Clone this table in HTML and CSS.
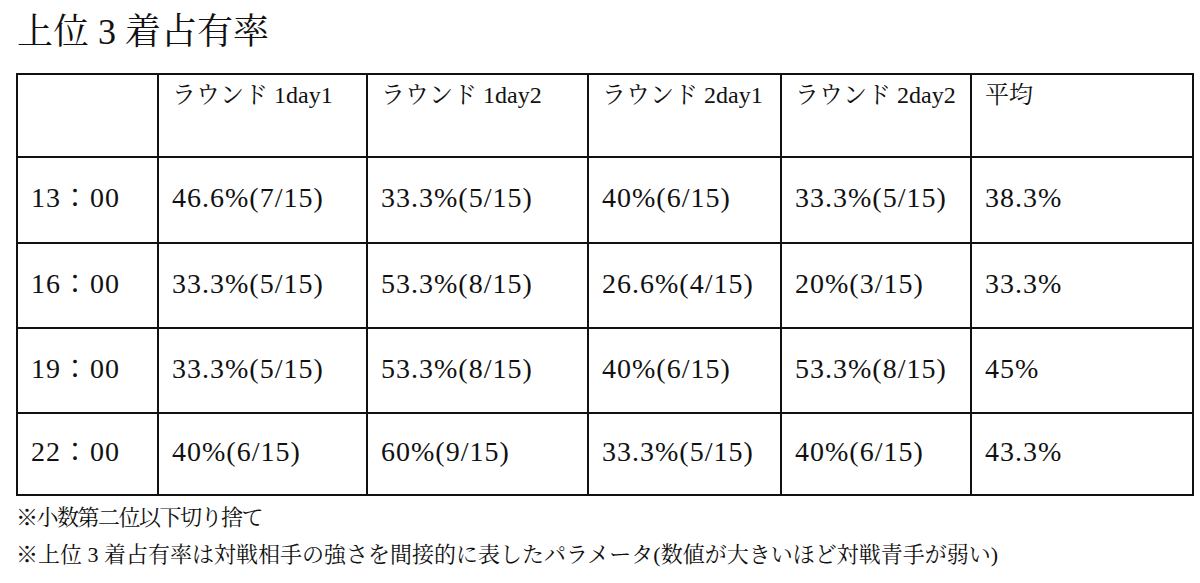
FILE: index.html
```html
<!DOCTYPE html>
<html lang="ja">
<head>
<meta charset="utf-8">
<title>上位3着占有率</title>
<link rel="stylesheet" href="styles.css">
</head>
<body>
<h1 class="title">上位 3 着占有率</h1>
<table class="stats">
  <colgroup>
    <col class="c1"><col class="c2"><col class="c3"><col class="c4"><col class="c5"><col class="c6">
  </colgroup>
  <thead>
    <tr class="head">
      <th></th>
      <th>ラウンド 1day1</th>
      <th>ラウンド 1day2</th>
      <th>ラウンド 2day1</th>
      <th>ラウンド 2day2</th>
      <th>平均</th>
    </tr>
  </thead>
  <tbody>
    <tr class="r1">
      <td>13：00</td><td>46.6%(7/15)</td><td>33.3%(5/15)</td><td>40%(6/15)</td><td>33.3%(5/15)</td><td>38.3%</td>
    </tr>
    <tr class="r2">
      <td>16：00</td><td>33.3%(5/15)</td><td>53.3%(8/15)</td><td>26.6%(4/15)</td><td>20%(3/15)</td><td>33.3%</td>
    </tr>
    <tr class="r3">
      <td>19：00</td><td>33.3%(5/15)</td><td>53.3%(8/15)</td><td>40%(6/15)</td><td>53.3%(8/15)</td><td>45%</td>
    </tr>
    <tr class="r4">
      <td>22：00</td><td>40%(6/15)</td><td>60%(9/15)</td><td>33.3%(5/15)</td><td>40%(6/15)</td><td>43.3%</td>
    </tr>
  </tbody>
</table>
<p class="note note-first">※小数第二位以下切り捨て</p>
<p class="note">※上位 3 着占有率は対戦相手の強さを間接的に表したパラメータ(数値が大きいほど対戦青手が弱い)</p>
</body>
</html>
```

FILE: styles.css
```css
html, body {
  margin: 0;
  padding: 0;
  background: #fff;
}
body {
  padding: 0 8px 0 16px;
  color: #111;
  font-family: "Liberation Serif", "Noto Serif CJK JP", "Noto Sans CJK JP", serif;
}
.title {
  margin: 11px 0 20px 1px;
  font-size: 36px;
  line-height: 42px;
  font-weight: normal;
}
.stats {
  border-collapse: collapse;
  width: 1176px;
  table-layout: fixed;
}
.c1 { width: 141px; }
.c2 { width: 209px; }
.c3 { width: 221px; }
.c4 { width: 193px; }
.c5 { width: 190px; }
.c6 { width: 222px; }
.stats th,
.stats td {
  border: 2px solid #111;
  padding: 0 0 0 13px;
  text-align: left;
  white-space: nowrap;
}
.stats th {
  font-weight: normal;
  font-size: 24px;
  line-height: 28px;
  vertical-align: top;
  padding-top: 6px;
}
.stats td {
  font-size: 28px;
  line-height: 32px;
  letter-spacing: 1px;
  vertical-align: middle;
  padding-bottom: 4px;
}
.head { height: 83px; }
.r1 { height: 86px; }
.r2 { height: 85px; }
.r3 { height: 85px; }
.r4 { height: 82px; }
.note {
  margin: 0;
  font-size: 22px;
  line-height: 37px;
}
.note-first {
  margin-top: 3px;
  letter-spacing: -1.5px;
}
```
